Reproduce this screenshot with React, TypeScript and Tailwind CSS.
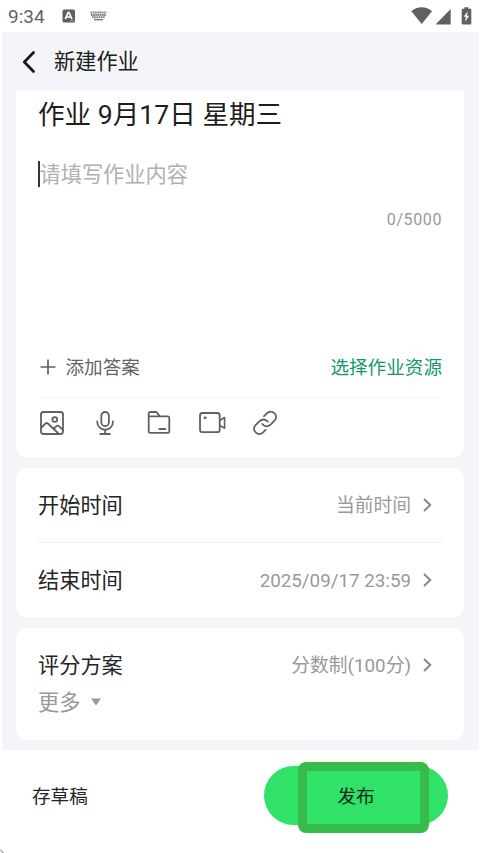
import type { ReactNode } from 'react';

function Chevron() {
  return (
    <svg className="ml-[12px] mr-[10px] h-[14px] w-[9px] shrink-0" viewBox="0 0 9 14" fill="none" stroke="#858585" strokeWidth="1.9">
      <path d="M1 1 7.3 7 1 13" />
    </svg>
  );
}

function Row({ label, value }: { label: string; value: string }) {
  return (
    <div className="flex h-[74px] items-center">
      <span className="pt-[2px] text-[21.2px] text-[#242424]">{label}</span>
      <span className="ml-auto pt-[2px] text-[18.8px] text-[#999]">{value}</span>
      <Chevron />
    </div>
  );
}

function ToolIcon({ children }: { children: ReactNode }) {
  return (
    <svg className="h-[28px] w-[28px]" viewBox="0 0 28 28" fill="none" stroke="#616161" strokeWidth="1.8" strokeLinecap="round" strokeLinejoin="round">
      {children}
    </svg>
  );
}

function StatusBar() {
  return (
    <div className="flex h-[32px] items-center bg-white pl-[8px] pr-[8px]">
      <span className="w-[54px] pt-[1px] text-[19px] text-[#646464]">9:34</span>
      <svg className="h-[14px] w-[14px]" viewBox="0 0 14 14">
        <rect x="0.5" y="0.5" width="12.5" height="13" rx="1.5" fill="#606060" />
        <path d="M3.3 10 6.1 3.7h1L9.9 10M4.8 8h3.8" fill="none" stroke="#fff" strokeWidth="1.7" />
        <path d="M8 11.5h4" stroke="#aaa" strokeWidth="0.8" />
      </svg>
      <svg className="ml-[14px] h-[10px] w-[17px]" viewBox="0 0 17 10" fill="none" stroke="#858585">
        <path d="M0.5 1.5h16M1 4h15M2 6.3h13" strokeWidth="1.9" strokeDasharray="1.7 0.5" />
        <path d="M4 8.7h9" strokeWidth="1.3" stroke="#777" />
      </svg>
      <svg className="ml-auto h-[22px] w-[62px]" viewBox="0 0 62 22" fill="#606060">
        <path d="M1.3 6.2C7.2.9 16.2.9 22 6.2L11.7 19Z" />
        <path d="M40.7 4v15.4H25.5Z" />
        <path d="M54.4 2.2h4v1.6h1.9q1 0 1 1v13.6q0 1-1 1h-7.6q-1 0-1-1V4.8q0-1 1-1h1.7Z" />
        <path d="m57.7 6.2-3.9 5.6h2.1l-.8 5 4-6.1h-2.2Z" fill="#fff" />
      </svg>
    </div>
  );
}

export default function App() {
  return (
    <div className="relative flex h-[853px] w-[480px] flex-col overflow-hidden bg-white font-['Roboto','Noto_Sans_CJK_SC',sans-serif] leading-none">
      <StatusBar />
      <main className="ml-[2px] mr-px flex h-[718px] flex-col bg-[#f4f5f8] pl-[14px] pr-[15px]">
        <header className="flex h-[59px] shrink-0 items-center pl-[6px]">
          <svg className="h-[22px] w-[14px]" viewBox="0 0 14 22" fill="none" stroke="#171717" strokeWidth="2.7" strokeLinecap="round" strokeLinejoin="round">
            <path d="M11.5 1.5 2.3 11l9.2 9.5" />
          </svg>
          <h1 className="ml-[18px] text-[21.2px] text-[#202020]">新建作业</h1>
        </header>

        <section className="flex h-[366px] shrink-0 flex-col rounded-b-[10px] bg-white px-[22px]">
          <h2 className="flex h-[46px] items-center whitespace-pre pt-[2px] text-[26.6px] text-[#1d1d1d]">作业 9月17日 星期三</h2>
          <div className="mt-[24px] flex h-[26px] items-center">
            <span className="h-[26px] w-[1.5px] bg-[#333]" />
            <span className="pt-[2px] text-[21.2px] text-[#b0b0b0]">请填写作业内容</span>
          </div>
          <div className="mt-[24px] flex h-[17px] items-center justify-end text-[16px] tracking-[0.6px] text-[#999]">0/5000</div>
          <div className="mt-[123px] flex h-[32px] items-center">
            <svg className="ml-[2px] h-[16px] w-[16px]" viewBox="0 0 16 16" stroke="#606060" strokeWidth="1.7">
              <path d="M.5 8h15M8 .5v15" />
            </svg>
            <span className="ml-[9.5px] pt-[2px] text-[18.6px] text-[#646464]">添加答案</span>
            <span className="ml-auto pt-[2px] text-[18.6px] text-[#129966]">选择作业资源</span>
          </div>
          <div className="mt-[14px] h-px bg-[#f8f8f8]" />
          <div className="mt-[11px] flex gap-[25.3px]">
            <ToolIcon>
              <rect x="3" y="3" width="22" height="22" rx="2.5" />
              <circle cx="16.8" cy="10.5" r="2.4" />
              <path d="m3.5 18.5 4-4q1.2-1.1 2.4 0l10 9.5M15.5 20l2.7-2.7q1.5-1.3 3 0l3.4 3.3" />
            </ToolIcon>
            <ToolIcon>
              <rect x="10.3" y="3" width="7.6" height="14" rx="3.8" />
              <path d="M6.2 12.5c0 11 15.8 11 15.8 0M14.1 20.8V25M9.3 25h9.6" />
            </ToolIcon>
            <ToolIcon>
              <path d="M3.7 7.4V4.6Q3.7 3 5.3 3h6.2l3.4 4.4h7.8Q24.3 7.4 24.3 9v13.2q0 1.6-1.6 1.6H5.3q-1.6 0-1.6-1.6Zm0 0h11.2M14.3 20h6" />
            </ToolIcon>
            <ToolIcon>
              <rect x="2" y="4" width="19.7" height="19.2" rx="2.5" />
              <circle cx="7" cy="8.8" r="1" fill="#616161" strokeWidth="1" />
              <path d="m22 11.3 4.6-2.8v10.8L22 16.5" strokeWidth="1.6" />
            </ToolIcon>
            <ToolIcon>
              <path d="m13 7.2 2.8-2.8c5-5 12.6 2 7.7 7.2l-3.7 3.8q-4.6 4.1-8.5-.4" />
              <path d="m14.6 20.8-2.5 2.6c-5.1 4.8-12.3-2.2-7.5-7.2L8.3 12.4q4.3-4 8.5.2" />
            </ToolIcon>
          </div>
        </section>

        <section className="mt-[11px] h-[149px] shrink-0 rounded-[11px] bg-white px-[22px]">
          <Row label="开始时间" value="当前时间" />
          <div className="h-px bg-[#eeeeee]" />
          <Row label="结束时间" value="2025/09/17 23:59" />
        </section>

        <section className="mt-[11px] h-[112px] shrink-0 rounded-[11px] bg-white px-[22px]">
          <Row label="评分方案" value="分数制(100分)" />
          <div className="-mt-[11px] flex h-[22px] items-center">
            <span className="pt-[2px] text-[21.2px] text-[#999]">更多</span>
            <svg className="ml-[11px] h-[8px] w-[10px]" viewBox="0 0 10 8"><path d="M0 .5h10L5 7.5Z" fill="#999" /></svg>
          </div>
        </section>
      </main>

      <footer className="flex h-[103px] items-center pl-[32px] pr-[32px] pb-[12px]">
        <button className="pt-[4px] text-[18.6px] text-[#242424]">存草稿</button>
        <button className="relative ml-auto flex h-[59px] w-[184px] items-center justify-center rounded-full bg-[#30e268] pt-[3px] text-[18.6px] text-[#102817]">
          发布
          <span className="absolute left-[34px] top-[-4px] h-[71px] w-[131px] rounded-[8px] border-[9px] border-[#37bc4b]" />
        </button>
      </footer>
      <svg className="absolute bottom-0 left-0 h-[4px] w-[4px]" viewBox="0 0 4 4"><path d="M0 .5 3.5 4" stroke="#706468" /></svg>
    </div>
  );
}
